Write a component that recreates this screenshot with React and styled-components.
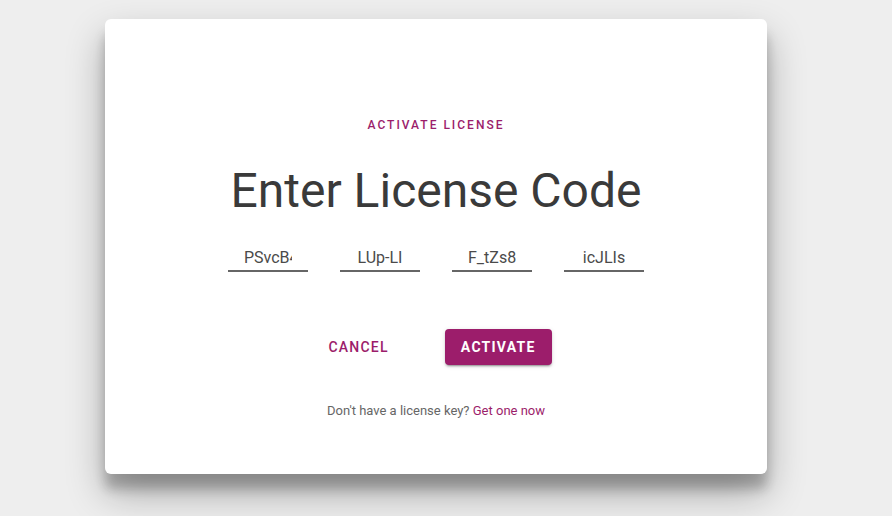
import React from "react";
import styled, { createGlobalStyle } from "styled-components";

const Global = createGlobalStyle`
  html, body { margin: 0; padding: 0; background: #eeeeee; }
  body { font-family: Roboto, "Noto Sans", sans-serif; }
`;

const Page = styled.div`
  width: 892px;
  height: 516px;
  box-sizing: border-box;
  padding: 19px 0 0 105px;
  overflow: hidden;
`;

const Card = styled.div`
  width: 662px;
  height: 455px;
  box-sizing: border-box;
  background: #fff;
  border-radius: 6px;
  box-shadow: 0 19px 38px rgba(0, 0, 0, 0.3), 0 15px 12px rgba(0, 0, 0, 0.22);
  display: flex;
  flex-direction: column;
  align-items: center;
  padding-top: 98px;
`;

const Eyebrow = styled.div`
  font-size: 12px;
  font-weight: 500;
  letter-spacing: 2px;
  color: #9c1d6b;
  line-height: 16px;
  text-transform: uppercase;
`;

const Title = styled.h1`
  margin: 30px 0 0;
  font-size: 48px;
  font-weight: 400;
  color: #3a3a3a;
  line-height: 56px;
`;

const Inputs = styled.div`
  margin-top: 25px;
  display: flex;
  gap: 32px;
`;

const CodeInput = styled.input`
  width: 80px;
  height: 28px;
  box-sizing: border-box;
  padding: 0 16px;
  border: none;
  border-bottom: 2px solid #666;
  outline: none;
  background: transparent;
  font-family: Roboto, sans-serif;
  font-size: 16px;
  color: #4a4a4a;
  text-align: center;
`;

const Actions = styled.div`
  margin-top: 57px;
  padding-right: 8px;
  display: flex;
  align-items: center;
  gap: 40px;
`;

const Button = styled.button`
  height: 36px;
  padding: 0 16px;
  border: none;
  border-radius: 4px;
  font-family: Roboto, sans-serif;
  font-size: 14px;
  font-weight: ${(p) => (p.$primary ? 700 : 500)};
  letter-spacing: 1.25px;
  text-transform: uppercase;
  cursor: pointer;
  color: ${(p) => (p.$primary ? "#fff" : "#9c1d6b")};
  background: ${(p) => (p.$primary ? "#9c1d6b" : "transparent")};
  box-shadow: ${(p) =>
    p.$primary
      ? "0 3px 1px -2px rgba(0,0,0,.2), 0 2px 2px 0 rgba(0,0,0,.14), 0 1px 5px 0 rgba(0,0,0,.12)"
      : "none"};
`;

const Footer = styled.p`
  margin: 38px 0 0;
  font-size: 13px;
  color: #666;
`;

const Link = styled.a`
  color: #9c1d6b;
  text-decoration: none;
`;

export default function App() {
  const codes = ["PSvcB4k", "LUp-LI", "F_tZs8", "icJLIs"];
  return (
    <Page>
      <Global />
      <Card>
        <Eyebrow>Activate License</Eyebrow>
        <Title>Enter License Code</Title>
        <Inputs>
          {codes.map((c) => (
            <CodeInput key={c} defaultValue={c} />
          ))}
        </Inputs>
        <Actions>
          <Button>Cancel</Button>
          <Button $primary>Activate</Button>
        </Actions>
        <Footer>
          Don't have a license key? <Link href="#">Get one now</Link>
        </Footer>
      </Card>
    </Page>
  );
}
